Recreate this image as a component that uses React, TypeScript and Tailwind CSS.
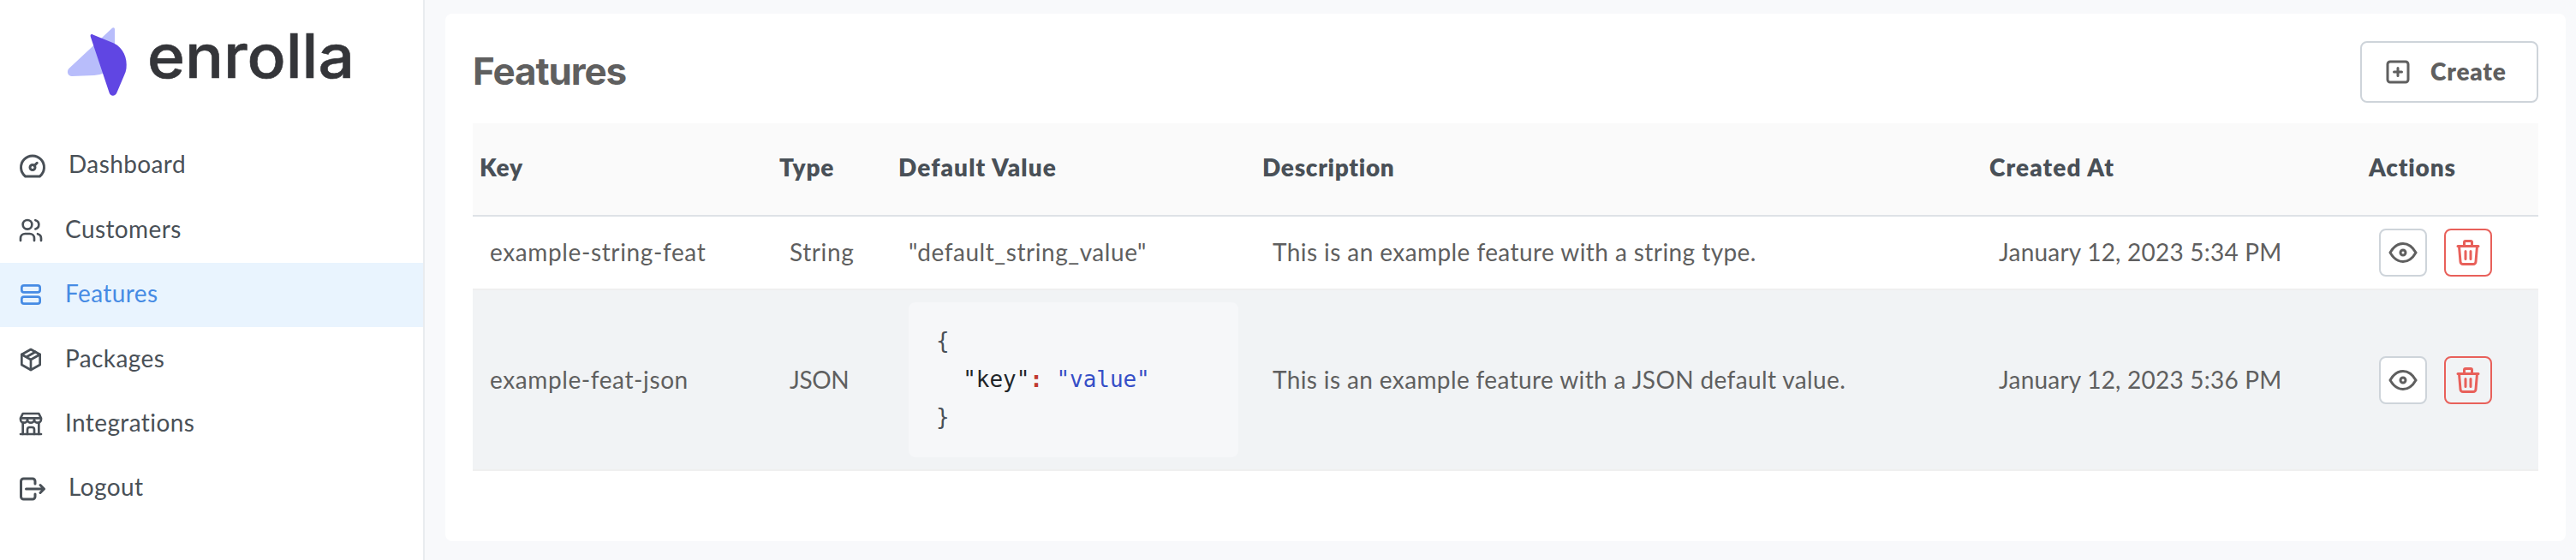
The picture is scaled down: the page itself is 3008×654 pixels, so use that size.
import React from "react";

type IconProps = { size: number; children: React.ReactNode };

function Icon({ size, children }: IconProps) {
  return (
    <svg
      width={size}
      height={size}
      viewBox="0 0 24 24"
      fill="none"
      stroke="currentColor"
      strokeWidth={2}
      strokeLinecap="round"
      strokeLinejoin="round"
      className="shrink-0"
    >
      {children}
    </svg>
  );
}

const nav = [
  {
    label: "Dashboard",
    size: 36,
    icon: (
      <>
        <circle cx="12" cy="13" r="2" />
        <path d="M13.45 11.55L15.5 9.5" />
        <path d="M6.4 20a9 9 0 1 1 11.2 0z" />
      </>
    ),
  },
  {
    label: "Customers",
    size: 32,
    icon: (
      <>
        <circle cx="9" cy="7" r="4" />
        <path d="M3 21v-2a4 4 0 0 1 4 -4h4a4 4 0 0 1 4 4v2" />
        <path d="M16 3.13a4 4 0 0 1 0 7.75" />
        <path d="M21 21v-2a4 4 0 0 0 -3 -3.85" />
      </>
    ),
  },
  {
    label: "Features",
    size: 32,
    active: true,
    icon: (
      <>
        <rect x="4" y="4" width="16" height="6" rx="2" />
        <rect x="4" y="14" width="16" height="6" rx="2" />
      </>
    ),
  },
  {
    label: "Packages",
    size: 32,
    icon: (
      <>
        <path d="M12 3l8 4.5v9l-8 4.5l-8 -4.5v-9z" />
        <path d="M12 12l8 -4.5M12 12v9M12 12l-8 -4.5M16 5.25l-8 4.5" />
      </>
    ),
  },
  {
    label: "Integrations",
    size: 32,
    icon: (
      <>
        <path d="M3 21h18" />
        <path d="M3 7v1a3 3 0 0 0 6 0v-1m0 1a3 3 0 0 0 6 0v-1m0 1a3 3 0 0 0 6 0v-1h-18l2 -4h14l2 4" />
        <path d="M5 21v-10.15M19 21v-10.15" />
        <path d="M9 21v-4a2 2 0 0 1 2 -2h2a2 2 0 0 1 2 2v4" />
      </>
    ),
  },
  {
    label: "Logout",
    size: 36,
    icon: (
      <>
        <path d="M14 8v-2a2 2 0 0 0 -2 -2h-7a2 2 0 0 0 -2 2v12a2 2 0 0 0 2 2h7a2 2 0 0 0 2 -2v-2" />
        <path d="M7 12h14l-3 -3m0 6l3 -3" />
      </>
    ),
  },
];

function Logo() {
  return (
    <svg width="400" height="128" viewBox="0 0 400 128" className="ml-[76px]">
      <path
        d="M54.5 33.200 C56.300 31.500 58 32 58 34.500 V68 L46 85 Q40 88 34 88 L8 89 C3 89 1.500 83 4.500 80 Z"
        fill="#b8bdfb"
      />
      <path
        d="M32.500 40.500 L57 50.500 C68 56 73 68 71.500 80 Q71 84 69 88 L60.500 108 C58.500 113 53 113 51.500 108 L29.800 43 C29 40.500 30.500 39.500 32.500 40.500 Z"
        fill="#6046e3"
      />
      <text
        x="96"
        y="90.500"
        textLength="242"
        lengthAdjust="spacingAndGlyphs"
        fontSize="71"
        fontWeight="500"
        fill="#343539"
        stroke="#343539"
        strokeWidth="0.600"
        className="font-['Inter',sans-serif]"
      >
        enrolla
      </text>
    </svg>
  );
}

function Actions() {
  return (
    <div className="flex gap-5">
      <button className="flex size-14 items-center justify-center rounded-lg border-2 border-[#ced4da] bg-white text-[#5f5f5f]">
        <Icon size={36}>
          <circle cx="12" cy="12" r="2" />
          <path d="M22 12c-2.667 4.667 -6 7 -10 7s-7.333 -2.333 -10 -7c2.667 -4.667 6 -7 10 -7s7.333 2.333 10 7" />
        </Icon>
      </button>
      <button className="flex size-14 items-center justify-center rounded-lg border-2 border-[#e8605a] text-[#e8605a]">
        <Icon size={36}>
          <path d="M4 7h16M10 11v6M14 11v6" />
          <path d="M5 7l1 12a2 2 0 0 0 2 2h8a2 2 0 0 0 2 -2l1 -12" />
          <path d="M9 7v-3a1 1 0 0 1 1 -1h4a1 1 0 0 1 1 1v3" />
        </Icon>
      </button>
    </div>
  );
}

const cols = "grid grid-cols-[350px_139px_425px_849px_443px_1fr]";

export default function App() {
  return (
    <div className="flex h-[654px] w-[3008px] overflow-hidden bg-[#f8f9fb] font-['Lato',sans-serif] text-[28px] leading-[43.400px] text-[#5f5f5f]">
      <aside className="flex w-[496px] shrink-0 flex-col border-r-2 border-[#e9ecef] bg-white">
        <div className="h-[156px] shrink-0">
          <Logo />
        </div>
        <nav className="flex flex-col">
          {nav.map((n) => (
            <a
              key={n.label}
              className={
                "flex h-[75.400px] items-center gap-6 pl-5 " +
                (n.active ? "bg-[#e9f4fe] text-[#468be4]" : "text-[#495057]")
              }
            >
              <Icon size={n.size}>{n.icon}</Icon>
              <span className="pb-[3px] tracking-[0.4px]">{n.label}</span>
            </a>
          ))}
        </nav>
      </aside>
      <main className="min-w-0 flex-1 py-4 pl-6 pr-3">
        <section className="h-[616px] rounded-lg bg-white px-8 pt-8">
          <header className="flex h-[72px] items-center justify-between">
            <h1 className="font-['Inter',sans-serif] text-[44px] font-bold tracking-[-1.1px]">Features</h1>
            <button className="flex h-[72px] w-[208px] items-center gap-5 rounded-lg border-2 border-[#ced4da] pl-6 font-extrabold">
              <Icon size={36}>
                <rect x="4" y="4" width="16" height="16" rx="2" />
                <path d="M9 12h6M12 9v6" />
              </Icon>
              <span className="pb-px tracking-[0.8px]">Create</span>
            </button>
          </header>
          <div className="mt-6">
            <div className={cols + " h-[109px] items-center border-b-2 border-[#dee2e6] bg-[#fafafa] pb-[3px] pl-2 font-extrabold text-[#495057]"}>
              <span className="tracking-[0.8px]">Key</span>
              <span className="tracking-[0.8px]">Type</span>
              <span className="tracking-[1.1px]">Default Value</span>
              <span className="tracking-[0.7px]">Description</span>
              <span className="tracking-[1.1px]">Created At</span>
              <span className="tracking-[0.8px]">Actions</span>
            </div>
            <div className={cols + " h-[86px] items-center border-b-2 border-[#efefef] pl-5"}>
              <span className="tracking-[0.62px]">example-string-feat</span>
              <span className="tracking-[0.6px]">String</span>
              <span className="tracking-[0.55px]">"default_string_value"</span>
              <span className="tracking-[0.42px]">This is an example feature with a string type.</span>
              <span className="-ml-px tracking-[0.22px]">January 12, 2023 5:34 PM</span>
              <Actions />
            </div>
            <div className={cols + " h-[211px] items-center border-b-2 border-[#efefef] bg-[#f1f3f5] pl-5"}>
              <span className="tracking-[0.6px]">example-feat-json</span>
              <span className="tracking-[-0.4px]">JSON</span>
              <pre className="h-[181px] w-[385px] rounded-lg bg-[#f6f7f9] px-8 pt-[23px] font-['DejaVu_Sans_Mono',monospace] text-[26px] leading-[44.600px] tracking-[-0.05px] text-[#495057]">
                {"{\n  "}
                <span className="text-[#212529]">"key"</span>
                <span className="font-bold text-[#c0392f]">:</span>{" "}
                <span className="text-[#364fc7]">"value"</span>
                {"\n}"}
              </pre>
              <span className="tracking-[0.38px]">This is an example feature with a JSON default value.</span>
              <span className="-ml-px tracking-[0.22px]">January 12, 2023 5:36 PM</span>
              <Actions />
            </div>
          </div>
        </section>
      </main>
    </div>
  );
}
